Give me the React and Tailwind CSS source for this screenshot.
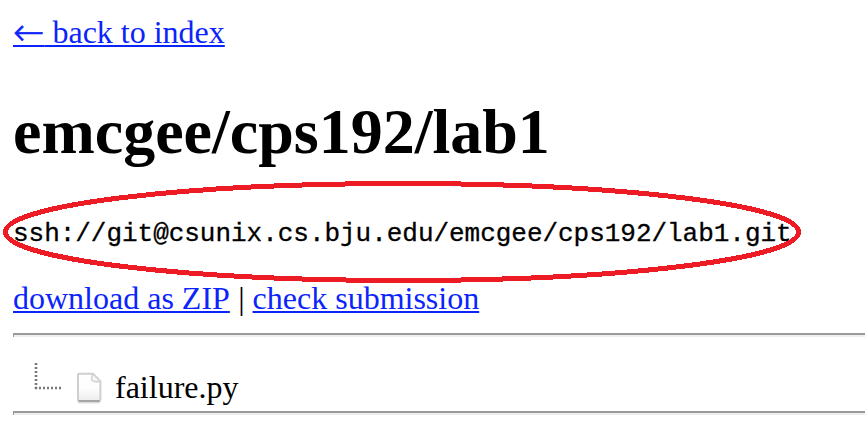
const linkClass = 'text-[#0b24fb] underline decoration-2 underline-offset-[2px] [text-decoration-skip-ink:none]';

function Rule() {
  return (
    <div className="h-1 border-l border-t-2 border-[#9a9a9a] bg-[#eeeeee]" />
  );
}

function TreeBranch() {
  return (
    <svg className="ml-[21px] h-7 w-7 shrink-0" viewBox="0 0 28 28" fill="none" stroke="#777" strokeWidth="2.6" strokeDasharray="2 2">
      <path d="M2 0V26" />
      <path d="M1 25H27" />
    </svg>
  );
}

function FileIcon() {
  return (
    <svg className="ml-[14px] mt-[9px] h-8 w-[26px] shrink-0" viewBox="0 0 26 32" fill="none">
      <defs>
        <linearGradient id="sheet" x1="0" y1="0" x2="0" y2="1">
          <stop offset="0" stopColor="#ffffff" />
          <stop offset="0.5" stopColor="#fdfdfd" />
          <stop offset="1" stopColor="#ededed" />
        </linearGradient>
      </defs>
      <path d="M2 30.5H24" stroke="#dddddd" strokeWidth="2" />
      <path d="M3.5 1.8H17L24.4 9.5V27.5Q24.4 29 23 29H3.5Q2 29 2 27.5V3.3Q2 1.8 3.5 1.8Z" fill="url(#sheet)" stroke="#cfcfcf" strokeWidth="2" />
      <path d="M16.5 2.5Q14.5 8 17 9Q19 10 23.5 9.5" fill="#f6f6f6" stroke="#d2d2d2" strokeWidth="1.6" />
      <path d="M2.5 29H23.5" stroke="#a6a6a6" strokeWidth="2" />
    </svg>
  );
}

export default function App() {
  return (
    <main className="relative h-[431px] w-full overflow-hidden bg-white pl-[13px] pt-[14px] font-['Liberation_Serif',serif] text-[32px] leading-9 text-black">
      <div className="whitespace-nowrap">
        <a className={linkClass}>
          <span className="align-[-2px] font-['DejaVu_Sans',sans-serif] text-[37.5px] font-extralight leading-[0px] [-webkit-text-stroke:0.6px_#0b24fb]">←</span> back to index
        </a>
      </div>
      <h1 className="mt-[46px] text-[64px] font-bold leading-[72px]">emcgee/cps192/lab1</h1>
      <div className="mt-[51px] whitespace-nowrap font-['Liberation_Mono',monospace] text-[26px] leading-[30px] tracking-[-0.03px] [-webkit-text-stroke:0.3px_black]">
        ssh://git@csunix.cs.bju.edu/emcgee/cps192/lab1.git
      </div>
      <div className="mb-[17px] mt-[31px] whitespace-nowrap">
        <a className={`${linkClass} mr-[0.3px]`}>download as ZIP</a> | <a className={linkClass}>check submission</a>
      </div>
      <Rule />
      <div className="flex h-[74px] items-start pt-[26px]">
        <TreeBranch />
        <FileIcon />
        <span className="ml-[13px] mt-[6px]">failure.py</span>
      </div>
      <Rule />
      <svg className="pointer-events-none absolute left-0 top-0 h-[431px] w-[865px]" viewBox="0 0 865 431" fill="none" shapeRendering="crispEdges">
        <ellipse cx="402" cy="232" rx="396.5" ry="48.5" stroke="#ed1c24" strokeWidth="5" />
      </svg>
    </main>
  );
}
